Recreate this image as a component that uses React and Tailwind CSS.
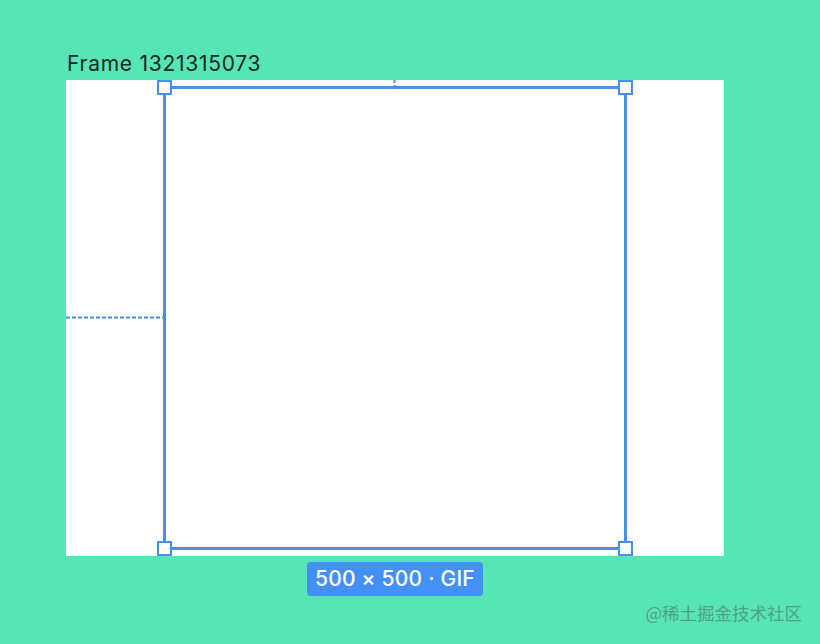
const blue = "#4590ec";

function Handle({ className }) {
  return (
    <div
      className={`absolute h-[15px] w-[15px] border-2 border-[#4590ec] bg-white ${className}`}
    />
  );
}

export default function App() {
  return (
    <div
      className="relative flex h-[644px] w-[820px] flex-col overflow-hidden bg-[#58e5b5] pl-[66px] pt-[49px]"
      style={{ fontFamily: "Inter, 'Noto Sans', sans-serif" }}
    >
      <div className="pl-px text-[21px] leading-[29px] tracking-[0.035em] text-[#0e2a22]">
        Frame 1321315073
      </div>

      {/* frame canvas */}
      <div className="relative mt-[2px] h-[476px] w-[658px] bg-white">
        <svg className="absolute left-0 top-[236px]" width="97" height="3">
          <line x1="0" y1="1.5" x2="97" y2="1.5" stroke={blue} strokeWidth="2" strokeDasharray="4 2" />
        </svg>
        <svg className="absolute left-[327px] top-0" width="3" height="8">
          <line x1="1.5" y1="0" x2="1.5" y2="8" stroke={blue} strokeWidth="2" strokeDasharray="3 2" />
        </svg>

        <div className="absolute left-[97px] top-[6px] h-[464px] w-[464px] border-[3px] border-[#4590ec]">
          <Handle className="-left-[9px] -top-[9px]" />
          <Handle className="-right-[9px] -top-[9px]" />
          <Handle className="-bottom-[9px] -left-[9px]" />
          <Handle className="-bottom-[9px] -right-[9px]" />
        </div>
      </div>

      <div className="mt-[6px] flex w-[658px] pl-[241px]">
        <div className="flex h-[34px] w-[176px] items-center justify-center rounded-[4px] bg-[#4490f6] text-[21px] font-medium tracking-[0.01em] text-white">
          500 × 500 · GIF
        </div>
      </div>

      <div
        className="absolute right-[18px] bottom-[19px] text-[17.5px] leading-[25px] text-[#52a08a]"
        style={{ fontFamily: "'Noto Sans CJK SC', 'Noto Sans', sans-serif" }}
      >
        @稀土掘金技术社区
      </div>
    </div>
  );
}
